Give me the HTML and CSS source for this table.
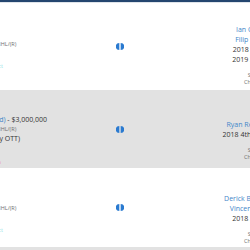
FILE: index.html
```html
<!DOCTYPE html>
<html>
<head>
<meta charset="utf-8">
<link rel="stylesheet" href="styles.css">
</head>
<body>
<div class="topbar"></div>
<div class="table">
  <div class="row r1">
    <div class="team left">
      <div class="sm">Contract 2 Years Left - ELC, RFA (NHL/(R)</div>
      <div class="tag cyan">Entry-Level Contract Prospect</div>
    </div>
    <div class="mid"><svg class="swap" viewBox="0 0 8 7" width="8" height="7"><path d="M3.3 0 A3.5 3.5 0 0 0 3.3 7 Z"/><path d="M4.7 0 A3.5 3.5 0 0 1 4.7 7 Z"/></svg></div>
    <div class="team right">
      <a class="lnk">Ian Cole (2019 FA)</a>
      <a class="lnk">Filip Gustavsson G</a>
      <div class="txt">2018 1st round pick</div>
      <div class="txt">2019 3rd round pick</div>
      <div class="sm first">Signed (2018)</div>
      <div class="sm">Change of rights</div>
    </div>
  </div>
  <div class="row r2">
    <div class="team left">
      <div class="txt"><a class="lnk">Derick Brassard (C/LW, 50% Retained)</a> - $3,000,000</div>
      <div class="sm">3 Years Remaining - M-UFA 35+ (NHL/(R)</div>
      <div class="txt">(50% of Salary is Retained by OTT)</div>
      <div class="tag red">Retained Salary Transaction</div>
    </div>
    <div class="mid"><svg class="swap" viewBox="0 0 8 7" width="8" height="7"><path d="M3.3 0 A3.5 3.5 0 0 0 3.3 7 Z"/><path d="M4.7 0 A3.5 3.5 0 0 1 4.7 7 Z"/></svg></div>
    <div class="team right">
      <a class="lnk">Ryan Reaves (RW) (VGK)</a>
      <div class="txt">2018 4th round pick (VGK)</div>
      <div class="sm first">Signed (2018)</div>
      <div class="sm">Change of rights</div>
    </div>
  </div>
  <div class="row r3">
    <div class="team left">
      <div class="sm">Contract 2 Years Left - ELC, RFA (NHL/(R)</div>
      <div class="tag cyan">Entry-Level Contract Prospect</div>
    </div>
    <div class="mid"><svg class="swap" viewBox="0 0 8 7" width="8" height="7"><path d="M3.3 0 A3.5 3.5 0 0 0 3.3 7 Z"/><path d="M4.7 0 A3.5 3.5 0 0 1 4.7 7 Z"/></svg></div>
    <div class="team right">
      <a class="lnk">Derick Brassard (C) - (PIT)</a>
      <a class="lnk">Vincent Dunn (C) (PIT)</a>
      <div class="txt">2018 3rd round pick</div>
      <div class="sm first">Signed (2018)</div>
      <div class="sm">Change of rights</div>
    </div>
  </div>
  <div class="row r4"></div>
</div>
</body>
</html>
```
FILE: styles.css
```css
html, body {
  margin: 0;
  padding: 0;
  background: #ffffff;
  overflow: hidden;
}
body {
  width: 250px;
  height: 250px;
  font-family: "Open Sans", "Liberation Sans", sans-serif;
  color: #333333;
}
.topbar {
  height: 2px;
  background: #24456f;
  border-bottom: 1px solid #dfe4ea;
}
.table {
  margin-left: -150px;
  width: 540px;
}
.row {
  display: grid;
  grid-template-columns: 250px 40px 250px;
}
.r1 { height: 87px; }
.r2 { height: 78px; background: #e2e2e2; }
.r3 { height: 79px; }
.r4 { height: 10px; background: #e2e2e2; }
.team {
  display: flex;
  flex-direction: column;
  align-items: center;
  text-align: center;
  white-space: nowrap;
}
.left { padding-right: 20px; }
.mid {
  display: flex;
  align-items: center;
  justify-content: center;
}
.swap { fill: #2a7ad0; margin-left: -1px; }
.txt, .lnk {
  display: block;
  font-size: 7px;
  line-height: 10px;
  color: #333333;
}
.lnk { color: #3f86c9; text-decoration: none; }
.txt .lnk { display: inline; }
.sm {
  font-size: 5.5px;
  line-height: 7px;
  color: #6f6f6f;
}
.right .sm.first { margin-top: 7px; }
.tag {
  font-size: 5.5px;
  line-height: 7px;
  margin-top: 15px;
}
.cyan { color: #8fe3e6; }
.red { color: #e8464a; }
.r1 .left { padding-top: 38px; }
.r2 .left { padding-top: 25px; }
.r2 .left .sm { line-height: 9px; }
.r2 .left .txt { line-height: 9px; }
.r2 .left .tag { margin-top: 16px; }
.r3 .left { padding-top: 37px; }
.r1 .right { padding-top: 22px; }
.r2 .right { padding-top: 30px; }
.r3 .right { padding-top: 26px; }
```
